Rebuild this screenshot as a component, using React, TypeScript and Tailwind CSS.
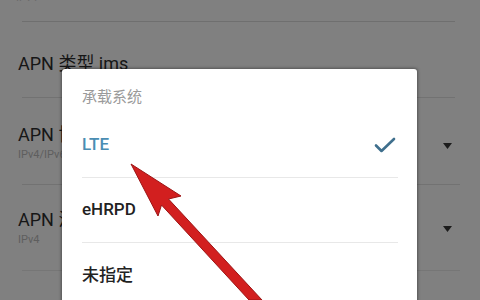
import React from "react";

const font = { fontFamily: 'Roboto, "Noto Sans CJK SC", sans-serif' };

function Tri() {
  return (
    <svg width="9" height="6" viewBox="0 0 9 6" className="block">
      <path d="M0 0 L9 0 L4.5 6 Z" fill="#1c1c1c" />
    </svg>
  );
}

export default function App() {
  return (
    <div
      className="relative w-[480px] h-[300px] overflow-hidden bg-[#808080]"
      style={font}
    >
      {/* background list */}
      <div className="flex flex-col">
        <div className="h-[22px] ml-[22px] mr-[25px] border-b border-[#6f6f6f] relative">
          <div className="absolute left-[-6px] top-[-9px] text-[11px] text-[#6a6a6a] leading-[14px]">
            IPv4
          </div>
        </div>
        <div className="h-[75px] pl-[18px] pt-[30px]">
          <div className="text-[18px] leading-[24px] text-[#161616]">APN 类型 ims</div>
        </div>
        <div className="ml-[22px] mr-[25px] border-t border-[#727272]" />
        <div className="h-[86px] pl-[18px] pr-[28px] flex items-start">
          <div className="flex-1 pt-[25px]">
            <div className="text-[18px] leading-[24px] text-[#161616]">APN 协议</div>
            <div className="text-[11px] leading-[16px] text-[#5e5e5e]">IPv4/IPv6</div>
          </div>
          <div className="pt-[45px]">
            <Tri />
          </div>
        </div>
        <div className="ml-[22px] mr-[20px] border-t border-[#727272]" />
        <div className="h-[85px] pl-[18px] pr-[28px] flex items-start">
          <div className="flex-1 pt-[23px]">
            <div className="text-[18px] leading-[24px] text-[#161616]">APN 漫游协议</div>
            <div className="text-[11px] leading-[16px] text-[#5e5e5e]">IPv4</div>
          </div>
          <div className="pt-[41px]">
            <Tri />
          </div>
        </div>
        <div className="ml-[22px] mr-[20px] border-t border-[#767676]" />
      </div>

      {/* dialog */}
      <div className="absolute left-[62px] top-[69px] w-[355px] h-[260px] bg-white rounded-[3px] shadow-[0_0_3px_1px_rgba(0,0,0,0.35)]">
        <div className="pl-[20px] pr-[19px]">
          <div className="pt-[18px] pb-[6px] text-[15px] leading-[20px] text-[#9a9a9a]">
            承载系统
          </div>
          <div className="h-[65px] flex items-center justify-between border-b border-[#e8e8e8]">
            <span className="text-[17px] font-medium text-[#4a8db3]">LTE</span>
            <svg width="24" height="18" viewBox="0 0 24 18" className="mr-[1px]">
              <path
                d="M3 9.5 L8.5 15 L21 3"
                fill="none"
                stroke="#3f6f8d"
                strokeWidth="2.6"
                strokeLinecap="round"
                strokeLinejoin="round"
              />
            </svg>
          </div>
          <div className="h-[65px] flex items-center border-b border-[#e8e8e8]">
            <span className="text-[17px] font-medium text-[#222]">eHRPD</span>
          </div>
          <div className="h-[65px] flex items-center">
            <span className="text-[17px] font-medium text-[#222]">未指定</span>
          </div>
        </div>
      </div>

      {/* red arrow */}
      <svg
        className="absolute left-0 top-0"
        width="480"
        height="300"
        viewBox="0 0 480 300"
      >
        <polygon
          points="131,164 181,196 168.5,199 262,300 249,300 161.5,205 158,216"
          fill="#d21f1f"
          stroke="#9c1515"
          strokeWidth="1"
          strokeLinejoin="round"
        />
      </svg>
    </div>
  );
}
